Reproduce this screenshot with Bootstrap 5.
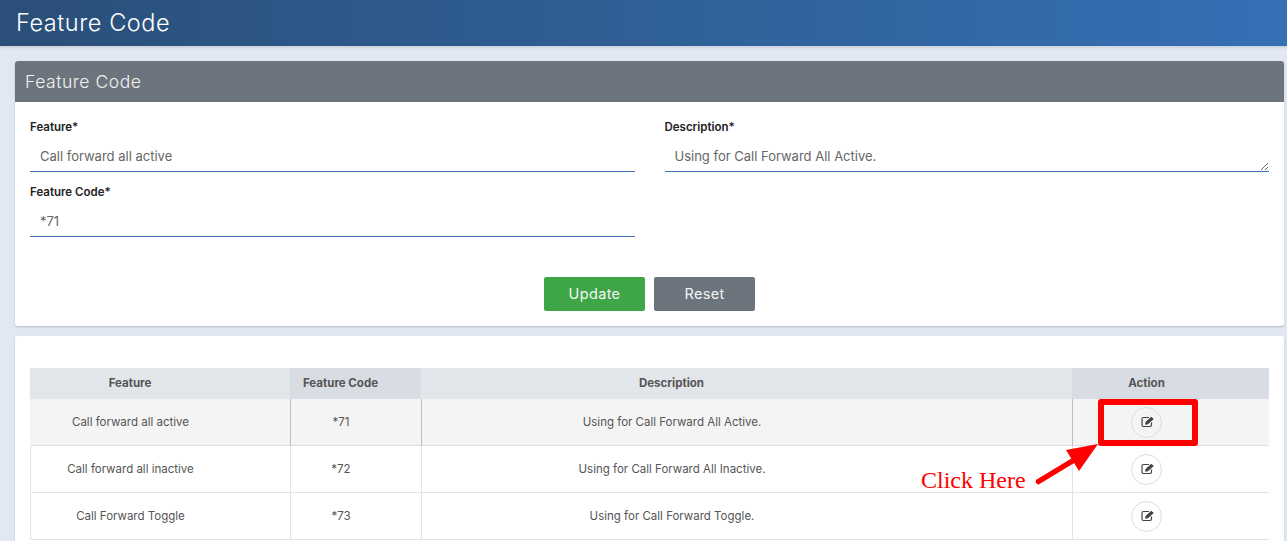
<!doctype html>
<html lang="en">
  <head>
    <meta charset="UTF-8" />
    <meta name="viewport" content="width=device-width, initial-scale=1.0" />
    <title>Feature Code</title>
    <link
      href="https://cdn.jsdelivr.net/npm/bootstrap@5.3.0/dist/css/bootstrap.min.css"
      rel="stylesheet"
    />
    <style>
      html, body { height: 541px; overflow: hidden; }
      body {
        position: relative;
        background: #e2e8f2;
        font-family: Inter, "Open Sans", sans-serif;
        color: #555;
      }
      .top-bar {
        height: 46px;
        padding: 0 16px;
        background: linear-gradient(90deg, #2a4f78, #3570b5);
        box-shadow: 0 1px 3px rgba(0, 0, 0, .15);
      }
      .top-bar h1 { font-size: 23.5px; font-weight: 300; margin: 0; color: #fff; line-height: 45px; letter-spacing: .55px; }
      .page-wrap { padding: 15px 3px 0 15px; }
      .panel { border: 0; border-radius: 3px; box-shadow: 0 1px 2px rgba(0, 0, 0, .2); }
      .panel-head {
        height: 41px;
        padding: 0 10px;
        background: #6c757d;
        color: #f1f1f1;
        font-size: 17.5px;
        font-weight: 300;
        line-height: 41px;
        letter-spacing: .55px;
        border-radius: 3px 3px 0 0;
      }
      .form-area { height: 224px; padding: 16px 15px 0; }
      .form-area .row { --bs-gutter-x: 30px; --bs-gutter-y: 0; }
      .form-area label { font-size: 11.5px; font-weight: 600; color: #222; margin: 0 0 4px; line-height: 19px; display: block; }
      .form-area label.second-line { margin-top: 11px; }
      .form-area .form-control {
        height: 31px;
        min-height: 31px;
        padding: 5px 10px;
        border: 0;
        border-bottom: 1px solid #4472b8;
        border-radius: 0;
        font-size: 13px;
        color: #666;
        box-shadow: none;
      }
      .form-area textarea.form-control { padding-top: 6px; }
      .btn-row { margin-top: 40px; gap: 9px; }
      .btn-save, .btn-clear {
        width: 101px;
        height: 34px;
        padding: 0;
        border: 0;
        border-radius: 2px;
        font-size: 14.5px;
        letter-spacing: .35px;
        color: #f4f4f4;
      }
      .btn-save { background: #3fa648; }
      .btn-clear { background: #6c757d; }
      .list-panel { margin-top: 10px; height: 220px; padding: 32px 15px 0; }
      .code-table {
        table-layout: fixed;
        margin: 0;
        font-size: 11.5px;
        color: #555;
        text-align: center;
        border-collapse: separate;
        border-spacing: 0;
      }
      .code-table th {
        height: 31px;
        padding: 0;
        border: 0;
        background: #e2e5ea;
        color: #555;
        font-weight: 700;
        vertical-align: middle;
      }
      .code-table th.shade { background: #d8dce3; }
      .code-table td {
        height: 47px;
        padding: 2px 0 0;
        vertical-align: middle;
        color: #555;
        border: 0;
        border-left: 1px solid #e3e3e3;
        border-bottom: 1px solid #e3e3e3;
        background: #fff;
        box-shadow: none;
      }
      /* cells sit left of centre in the original, padding scales with the column */
      .code-table tr > :nth-child(1) { padding-right: 60px; }
      .code-table tr > :nth-child(2) { padding-right: 30px; }
      .code-table tr > :nth-child(3) { padding-right: 150px; }
      .code-table tr > th:nth-child(4) { padding-right: 48px; }
      .code-table tr > td:nth-child(4) { padding: 0 49px 0 0; }
      .code-table tr.hit td { background: #f4f4f4; border-left-color: #bdbdbd; border-bottom-color: #ddd; }
      .code-table tr.hit td:first-child { border-left-color: #f4f4f4; }
      .edit-btn {
        display: block;
        width: 31px;
        height: 31px;
        margin: 0 auto;
        padding: 0;
        border: 1px solid #ddd;
        border-radius: 50%;
        background: transparent;
        line-height: 1;
      }
      .edit-btn svg { display: block; margin-left: 9px; }
      .mark-box {
        position: absolute;
        left: 1098px;
        top: 399px;
        width: 100px;
        height: 47px;
        border: 6px solid #f00;
        border-radius: 3px;
      }
      .mark-arrow { position: absolute; left: 1030px; top: 440px; }
      .mark-text {
        position: absolute;
        left: 921px;
        top: 466px;
        font-family: "Liberation Serif", serif;
        font-size: 24px;
        line-height: 28px;
        color: #f00;
      }
    </style>
  </head>
  <body>
    <div class="top-bar"><h1>Feature Code</h1></div>

    <div class="page-wrap">
      <div class="card panel">
        <div class="panel-head">Feature Code</div>
        <form class="form-area">
          <div class="row">
            <div class="col-6">
              <label for="featureName">Feature*</label>
              <input class="form-control" id="featureName" value="Call forward all active" />
            </div>
            <div class="col-6">
              <label for="featureDesc">Description*</label>
              <textarea class="form-control" id="featureDesc">Using for Call Forward All Active.</textarea>
            </div>
          </div>
          <div class="row">
            <div class="col-6">
              <label for="featureCode" class="second-line">Feature Code*</label>
              <input class="form-control" id="featureCode" value="*71" />
            </div>
          </div>
          <div class="d-flex justify-content-center btn-row">
            <button type="button" class="btn btn-save">Update</button>
            <button type="button" class="btn btn-clear">Reset</button>
          </div>
        </form>
      </div>

      <div class="card panel list-panel">
        <table class="table code-table">
          <colgroup>
            <col style="width: 260px" />
            <col style="width: 131px" />
            <col style="width: 651px" />
            <col style="width: 197px" />
          </colgroup>
          <thead>
            <tr>
              <th>Feature</th>
              <th class="shade">Feature Code</th>
              <th>Description</th>
              <th class="shade">Action</th>
            </tr>
          </thead>
          <tbody id="rows"></tbody>
        </table>
      </div>
    </div>

    <div class="mark-text">Click Here</div>
    <svg class="mark-arrow" width="72" height="50" viewBox="0 0 72 50">
      <line x1="8.5" y1="41.5" x2="44" y2="20" stroke="#f00" stroke-width="5.5" stroke-linecap="round" />
      <polygon points="36,10 68,4 49,31" fill="#f00" />
    </svg>
    <div class="mark-box"></div>

    <script>
      const rows = [
        ["Call forward all active", "*71", "Using for Call Forward All Active."],
        ["Call forward all inactive", "*72", "Using for Call Forward All Inactive."],
        ["Call Forward Toggle", "*73", "Using for Call Forward Toggle."],
      ];
      const icon =
        '<svg width="14" height="12" viewBox="0 0 14 12">' +
        '<path d="M10.500 6.500v2.600c0 .8-.6 1.400-1.400 1.400H2.400c-.8 0-1.400-.6-1.400-1.400V2.900c0-.8.600-1.400 1.400-1.400H8" fill="none" stroke="#444" stroke-width="1.200"/>' +
        '<path d="M4.500 6 10.300.7l2.500 2.300L7 8.300l-2.900.4z" fill="#444"/></svg>';
      document.getElementById("rows").innerHTML = rows
        .map(
          (r, i) =>
            `<tr class="${i === 0 ? "hit" : ""}"><td>${r[0]}</td><td>${r[1]}</td><td>${r[2]}</td>` +
            `<td><button type="button" class="btn edit-btn">${icon}</button></td></tr>`
        )
        .join("");
    </script>
  </body>
</html>
